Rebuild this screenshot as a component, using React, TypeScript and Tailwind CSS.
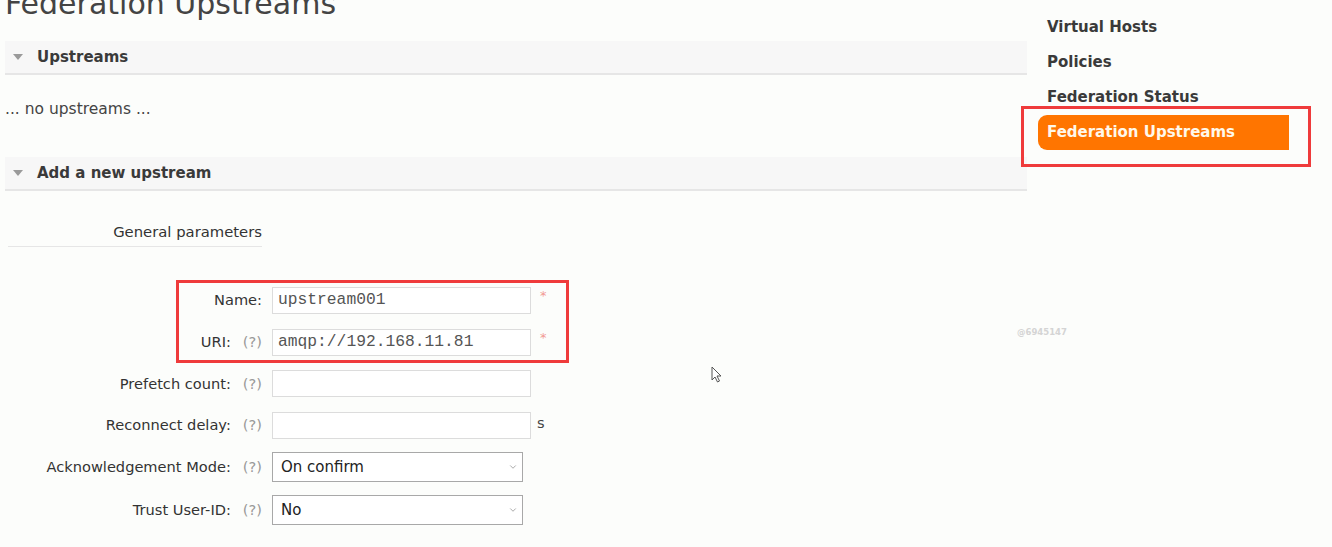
import { ChevronDown } from "lucide-react";

const font = { fontFamily: '"DejaVu Sans", Verdana, sans-serif' };
const mono = { fontFamily: '"Liberation Mono", "Courier New", monospace' };

const SectionBar = ({ title }: { title: string }) => (
  <div className="flex h-[34px] items-center bg-[#f7f7f7] border-b-2 border-[#e6e6e6]">
    <svg width="10" height="6" viewBox="0 0 10 6" className="ml-[8px] mr-[14px]">
      <polygon points="0,0 10,0 5,6" fill="#9a9a9a" />
    </svg>
    <span className="text-[15px] font-bold text-[#3a3a3a]">{title}</span>
  </div>
);

const Help = () => <span className="ml-[12px] text-[#999]">(?)</span>;

const Row = ({
  label,
  help,
  children,
  h,
}: {
  label: string;
  help?: boolean;
  children: React.ReactNode;
  h: string;
}) => (
  <div className={`flex items-center ${h}`}>
    <div className="w-[257px] text-right text-[14.6px] text-[#333]">
      {label}
      {help && <Help />}
    </div>
    <div className="ml-[10px] flex items-center">{children}</div>
  </div>
);

const TextInput = ({ value }: { value?: string }) => (
  <div
    className="flex h-[27px] w-[259px] items-center border border-[#dcdcdc] bg-white px-[5px] text-[16.3px] text-[#555]"
    style={mono}
  >
    {value}
  </div>
);

const Select = ({ value }: { value: string }) => (
  <div className="flex h-[30px] w-[251px] items-center justify-between border border-[#a8a8a8] bg-white pl-[8px] pr-[4px] text-[15px] text-[#222]">
    <span>{value}</span>
    <ChevronDown className="h-[10px] w-[10px] text-[#777]" strokeWidth={1.5} />
  </div>
);

const Req = () => <span className="ml-[9px] -mt-[8px] text-[13px] text-[#f29b94]">*</span>;

export default function App() {
  return (
    <div className="relative flex h-[547px] w-[1332px] overflow-hidden bg-[#fcfdfb]" style={font}>
      {/* main column */}
      <div className="ml-[5px] w-[1022px]">
        <h1 className="-mt-[14px] h-[55px] text-[30px] leading-[36px] text-[#444]">Federation Upstreams</h1>
        <SectionBar title="Upstreams" />
        <div className="flex h-[82px] items-center pb-[12px] text-[15.5px] text-[#444]">... no upstreams ...</div>
        <SectionBar title="Add a new upstream" />
        <div className="ml-[3px] mt-[30px] flex w-[254px] justify-end border-b border-[#e6e6e6] pb-[3px] text-[14.8px] text-[#333]">
          General parameters
        </div>
        <div className="mt-[32px]">
          <Row label="Name:" h="h-[42px]">
            <TextInput value="upstream001" />
            <Req />
          </Row>
          <Row label="URI:" help h="h-[42px]">
            <TextInput value="amqp://192.168.11.81" />
            <Req />
          </Row>
          <Row label="Prefetch count:" help h="h-[41px]">
            <TextInput />
          </Row>
          <Row label="Reconnect delay:" help h="h-[42px]">
            <TextInput />
            <span className="ml-[6px] -mt-[4px] text-[14.6px] text-[#444]">s</span>
          </Row>
          <Row label="Acknowledgement Mode:" help h="h-[42px]">
            <Select value="On confirm" />
          </Row>
          <Row label="Trust User-ID:" help h="h-[44px]">
            <Select value="No" />
          </Row>
        </div>
      </div>

      {/* right nav */}
      <div className="ml-[11px] flex w-[260px] flex-col text-[15px] font-bold text-[#3a3a3a]">
        <div className="mt-[10px] flex h-[35px] items-center pl-[9px]">Virtual Hosts</div>
        <div className="flex h-[35px] items-center pl-[9px]">Policies</div>
        <div className="flex h-[35px] items-center pl-[9px]">Federation Status</div>
        <div className="flex h-[35px] w-[251px] items-center rounded-l-[9px] bg-[#ff7500] pl-[9px] text-[#fff8ea]">
          Federation Upstreams
        </div>
      </div>

      {/* annotation boxes */}
      <div className="absolute left-[176px] top-[280px] h-[83px] w-[393px] border-[3px] border-[#ef3b3b]" />
      <div className="absolute left-[1021px] top-[106px] h-[61px] w-[290px] border-[3px] border-[#ef3b3b]" />

      {/* watermark */}
      <div className="absolute left-[1017px] top-[326px] text-[8.5px] font-semibold text-[#d4d4d4]">@6945147</div>

      {/* mouse cursor */}
      <svg className="absolute left-[711px] top-[366px]" width="12" height="18" viewBox="0 0 12 18">
        <path d="M1 1 L1 14 L4 11 L6.5 16 L8.5 15 L6 10 L10 10 Z" fill="#fff" stroke="#555" strokeWidth="1" />
      </svg>
    </div>
  );
}
